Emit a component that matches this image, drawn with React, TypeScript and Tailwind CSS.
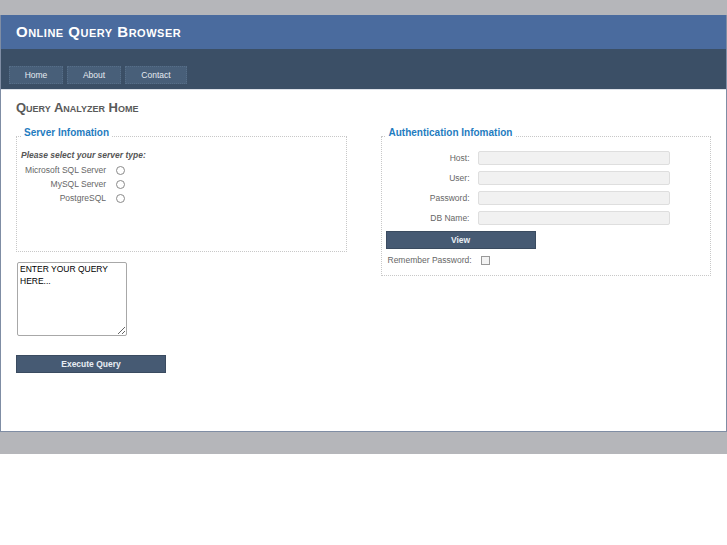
import React from 'react';

const navItems = [
    { label: 'Home', w: 'w-[54px]' },
    { label: 'About', w: 'w-[54px]' },
    { label: 'Contact', w: 'w-[62px]' },
];

const serverTypes = ['Microsoft SQL Server', 'MySQL Server', 'PostgreSQL'];
const authFields = ['Host:', 'User:', 'Password:', 'DB Name:'];

export default function App() {
    return (
        <div className="min-h-[545px] w-[727px] bg-white font-['Liberation_Sans',Arial,sans-serif]">
            <div className="h-[15px] bg-[#b5b6ba]" />

            <div className="h-[417px] border-x border-b border-[#7f8da4] flex flex-col">
                {/* header */}
                <div className="h-[34px] bg-[#4a6b9e] flex items-center pl-[15px]">
                    <h1 className="text-[15px] font-bold text-white [font-variant:small-caps] tracking-[0.5px]">
                        Online Query Browser
                    </h1>
                </div>

                {/* nav */}
                <div className="h-[40px] bg-[#3b4f66] flex items-start gap-[4px] pl-[8px] pt-[17px]">
                    {navItems.map((item) => (
                        <div
                            key={item.label}
                            className={`${item.w} h-[18px] bg-[#485f79] border border-dotted border-[#566e88] flex items-center justify-center text-[8.5px] text-[#e6ebf1]`}
                        >
                            {item.label}
                        </div>
                    ))}
                </div>

                {/* content */}
                <div className="flex-1 px-[15px] pt-[11px] border-t border-[#dde2e9]">
                    <h2 className="h-[14px] leading-[14px] text-[13px] font-bold text-[#5a5a5a] [font-variant:small-caps]">
                        Query Analyzer Home
                    </h2>

                    <div className="mt-[12px] flex gap-[34px] items-start">
                        {/* left column */}
                        <div className="w-[331px] flex flex-col">
                            <fieldset className="h-[125px] border border-dotted border-[#c8c8c8]">
                                <legend className="ml-[4px] px-[3px] pb-[6px] text-[10px] leading-[12px] font-bold text-[#1f7cc0]">
                                    Server Infomation
                                </legend>
                                <div className="pl-[4px]">
                                    <p className="pt-[4px] h-[16px] leading-[12px] text-[8.5px] font-bold italic text-[#555]">
                                        Please select your server type:
                                    </p>
                                    <div className="mt-[2px] flex flex-col">
                                        {serverTypes.map((s) => (
                                            <label key={s} className="h-[14px] flex items-center">
                                                <span className="w-[85px] text-right text-[8.5px] text-[#666]">{s}</span>
                                                <input
                                                    type="radio"
                                                    name="server"
                                                    className="ml-[10px] appearance-none w-[9px] h-[9px] rounded-full border border-[#8a8a8a] bg-white"
                                                />
                                            </label>
                                        ))}
                                    </div>
                                </div>
                            </fieldset>

                            <textarea
                                defaultValue="ENTER YOUR QUERY HERE..."
                                className="mt-[10px] ml-[1px] w-[110px] h-[74px] border border-[#a8a8a8] rounded-[2px] px-[2px] pt-0 text-[8.5px] leading-[12px] text-black"
                            />

                            <button className="mt-[19px] w-[150px] h-[18px] bg-[#465a73] border border-[#3a4b60] text-[8.5px] font-bold text-[#e8edf3]">
                                Execute Query
                            </button>
                        </div>

                        {/* right column */}
                        <fieldset className="w-[331px] h-[149px] border border-dotted border-[#c8c8c8]">
                            <legend className="ml-[4px] px-[3px] pb-[6px] text-[10px] leading-[12px] font-bold text-[#1f7cc0]">
                                Authentication Infomation
                            </legend>
                            <div className="pt-[6px] flex flex-col gap-[6px]">
                                {authFields.map((f) => (
                                    <div key={f} className="h-[14px] flex items-center">
                                        <span className="w-[88px] text-right text-[8.5px] text-[#666]">{f}</span>
                                        <input
                                            type="text"
                                            className="ml-[8px] w-[192px] h-[14px] bg-[#f1f1f1] border border-[#dedede] rounded-[2px]"
                                        />
                                    </div>
                                ))}
                            </div>
                            <button className="mt-[6px] ml-[4px] w-[150px] h-[18px] bg-[#465a73] border border-[#3a4b60] text-[8.5px] font-bold text-[#e8edf3]">
                                View
                            </button>
                            <div className="mt-[3px] h-[16px] flex items-center pl-[6px]">
                                <span className="w-[93px] text-[8.5px] text-[#666]">Remember Password:</span>
                                <input
                                    type="checkbox"
                                    className="appearance-none w-[9px] h-[9px] border border-[#999] bg-[#f3f3f3]"
                                />
                            </div>
                        </fieldset>
                    </div>
                </div>
            </div>

            <div className="h-[22px] bg-[#b5b6ba]" />
        </div>
    );
}
